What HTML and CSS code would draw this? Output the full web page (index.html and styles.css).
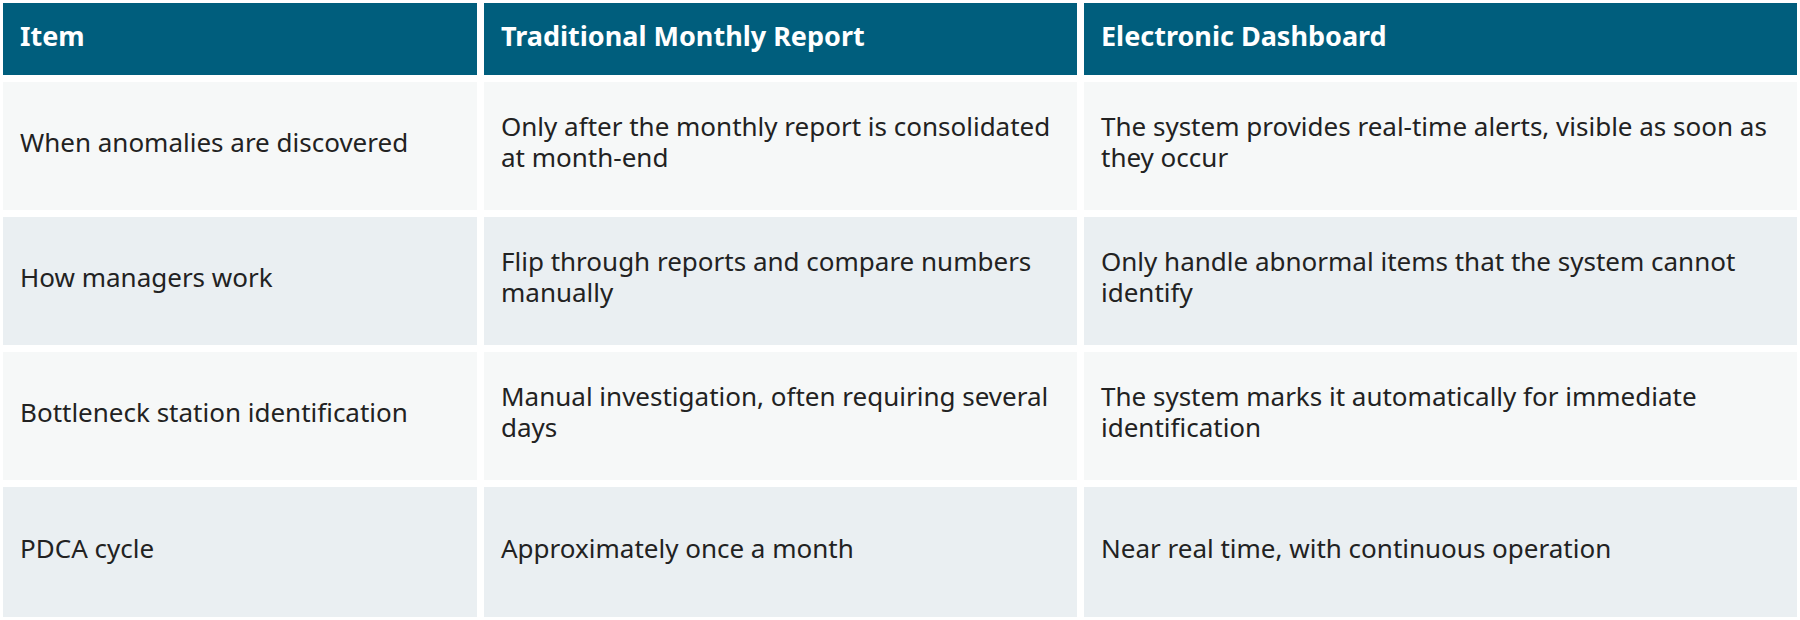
FILE: index.html
```html
<!DOCTYPE html>
<html lang="en">
<head>
<meta charset="utf-8">
<title>Comparison</title>
<link rel="stylesheet" href="styles.css">
</head>
<body>
<div class="table">
  <div class="cell head">Item</div>
  <div class="cell head">Traditional Monthly Report</div>
  <div class="cell head">Electronic Dashboard</div>

  <div class="cell odd">When anomalies are discovered</div>
  <div class="cell odd">Only after the monthly report is consolidated at month-end</div>
  <div class="cell odd">The system provides real-time alerts, visible as soon as they occur</div>

  <div class="cell even">How managers work</div>
  <div class="cell even">Flip through reports and compare numbers manually</div>
  <div class="cell even">Only handle abnormal items that the system cannot identify</div>

  <div class="cell odd">Bottleneck station identification</div>
  <div class="cell odd">Manual investigation, often requiring several days</div>
  <div class="cell odd">The system marks it automatically for immediate identification</div>

  <div class="cell even">PDCA cycle</div>
  <div class="cell even">Approximately once a month</div>
  <div class="cell even">Near real time, with continuous operation</div>
</div>
</body>
</html>
```
FILE: styles.css
```css
html, body {
  margin: 0;
  padding: 0;
  background: #ffffff;
}
body {
  font-family: "Noto Sans", "Open Sans", sans-serif;
  color: #222222;
}
.table {
  box-sizing: border-box;
  width: 1800px;
  height: 620px;
  padding: 3px;
  display: grid;
  grid-template-columns: 474px 593px 713px;
  grid-template-rows: 72px 128px 128px 128px 1fr;
  gap: 7px;
}
.cell {
  display: flex;
  align-items: center;
  padding: 0 17px 8px;
  font-size: 26px;
  line-height: 31px;
}
.head {
  background: #005e7d;
  color: #ffffff;
  font-weight: 700;
  font-size: 27px;
}
.odd {
  background: #f6f8f8;
}
.even {
  background: #eaeff2;
}
```
